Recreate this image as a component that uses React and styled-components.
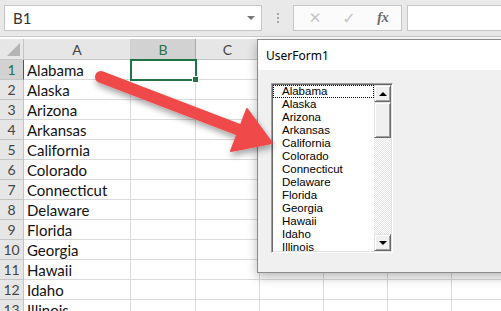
import styled, { createGlobalStyle } from 'styled-components';

const GlobalStyle = createGlobalStyle`
  html, body {
    margin: 0;
    padding: 0;
    width: 501px;
    height: 311px;
    overflow: hidden;
    background: #ffffff;
  }
`;

const states = [
  "Alabama", "Alaska", "Arizona", "Arkansas", "California", "Colorado",
  "Connecticut", "Delaware", "Florida", "Georgia", "Hawaii", "Idaho", "Illinois",
];

const columns = ["A", "B", "C", "D", "E", "F", "G"];

const Page = styled.div`
  position: relative;
  width: 501px;
  height: 311px;
  overflow: hidden;
  font-family: Lato, "Liberation Sans", sans-serif;
`;

// formula bar strip
const Toolbar = styled.div`
  display: flex;
  align-items: center;
  height: 37px;
  background: #e9e9e9;
  border-bottom: 1px solid #c9c9c9;
  margin-bottom: 2px;
  box-sizing: border-box;
  padding: 0 0 0 4px;
`;

const NameBox = styled.div`
  position: relative;
  display: flex;
  align-items: center;
  width: 258px;
  height: 26px;
  box-sizing: border-box;
  background: #fff;
  border: 1px solid #c6c6c6;
  padding-left: 8px;
  font-size: 15px;
  color: #333;
`;

const Caret = styled.span`
  position: absolute;
  right: 6px;
  top: 10px;
  width: 0;
  height: 0;
  border-left: 4px solid transparent;
  border-right: 4px solid transparent;
  border-top: 4px solid #777;
`;

const Grip = styled.div`
  width: 31px;
  display: flex;
  flex-direction: column;
  align-items: center;
  gap: 2px;
  & span {
    width: 2px;
    height: 2px;
    background: #a8a8a8;
  }
`;

const FuncBox = styled.div`
  display: flex;
  align-items: center;
  justify-content: space-between;
  width: 109px;
  height: 26px;
  box-sizing: border-box;
  background: #fbfbfb;
  border: 1px solid #c6c6c6;
  margin-right: 5px;
  padding: 0 8px 0 11px;
`;

const FuncIcon = styled.span`
  width: 20px;
  text-align: center;
  font-size: ${p => p.$size || 15}px;
  color: ${p => p.$color || "#c4c4c4"};
  font-family: ${p => p.$serif ? '"Liberation Serif", serif' : '"DejaVu Sans", sans-serif'};
  font-style: ${p => p.$serif ? "italic" : "normal"};
  font-weight: ${p => p.$serif ? "bold" : "normal"};
`;

const FormulaBox = styled.div`
  flex: 1;
  height: 26px;
  box-sizing: border-box;
  background: #fff;
  border: 1px solid #c6c6c6;
  border-right: none;
`;

const Sheet = styled.div`
  display: grid;
  grid-template-columns: 24px 107px 65px 64px 64px 64px 64px 64px;
  grid-auto-rows: 20px;
  grid-template-rows: 21px;
`;

const Corner = styled.div`
  position: relative;
  background: #e6e6e6;
  border-right: 1px solid #c4c4c4;
  border-bottom: 1px solid #c4c4c4;
  &::after {
    content: "";
    position: absolute;
    right: 3px;
    bottom: 3px;
    border-left: 13px solid transparent;
    border-bottom: 13px solid #b4b4b4;
  }
`;

const ColHead = styled.div`
  display: flex;
  align-items: center;
  justify-content: center;
  background: ${p => p.$active ? "#d2d2d2" : "#e6e6e6"};
  border-right: 1px solid ${p => p.$active ? "#a8a8a8" : "#cfcfcf"};
  border-bottom: 1px solid ${p => p.$active ? "#217346" : "#c4c4c4"};
  font-size: 14px;
  color: ${p => p.$active ? "#217346" : "#444"};
`;

const RowHead = styled.div`
  display: flex;
  align-items: center;
  justify-content: center;
  background: ${p => p.$active ? "#d2d2d2" : "#e6e6e6"};
  border-right: 1px solid ${p => p.$active ? "#217346" : "#c4c4c4"};
  border-bottom: 1px solid #c4c4c4;
  font-size: 14px;
  color: ${p => p.$active ? "#217346" : "#444"};
`;

const Cell = styled.div`
  position: relative;
  display: flex;
  align-items: center;
  padding-left: 3px;
  border-right: 1px solid #dadada;
  border-bottom: 1px solid #dadada;
  font-size: 15px;
  color: #111;
  white-space: nowrap;
  ${p => p.$selected && `
    outline: 2px solid #217346;
    outline-offset: -1px;
    z-index: 1;
    &::after {
      content: "";
      position: absolute;
      right: -4px;
      bottom: -4px;
      width: 5px;
      height: 5px;
      background: #217346;
      border: 1px solid #fff;
    }
  `}
`;

// VBA form window floating over the sheet
const FormWindow = styled.div`
  position: absolute;
  left: 257px;
  top: 39px;
  width: 300px;
  height: 232px;
  display: flex;
  flex-direction: column;
  border: 1px solid #8c8c8c;
  background: #f0f0f0;
  box-shadow: 0 4px 10px rgba(0, 0, 0, 0.28);
  z-index: 2;
`;

const TitleBar = styled.div`
  height: 30px;
  display: flex;
  align-items: center;
  padding-left: 8px;
  background: #fff;
  font-family: "Noto Sans", "Open Sans", sans-serif;
  font-size: 12px;
  color: #000;
`;

const FormBody = styled.div`
  flex: 1;
  padding: 13px 0 0 13px;
`;

const ListBox = styled.div`
  display: flex;
  width: 122px;
  height: 170px;
  box-sizing: border-box;
  border-top: 1px solid #a0a0a0;
  border-left: 1px solid #a0a0a0;
  border-right: 1px solid #fff;
  border-bottom: 1px solid #fff;
  box-shadow: inset 1px 1px 0 #696969, inset -1px -1px 0 #e3e3e3;
  background: #fff;
  padding: 1px;
`;

const Items = styled.div`
  flex: 1;
  overflow: hidden;
  font-family: "Liberation Sans", Arial, sans-serif;
  font-size: 11.5px;
  color: #000;
`;

const Item = styled.div`
  height: 13px;
  line-height: 13px;
  padding-left: 9px;
  box-sizing: border-box;
  outline: ${p => p.$focus ? "1px dotted #000" : "none"};
  outline-offset: -1px;
  white-space: nowrap;
`;

const ScrollBar = styled.div`
  width: 17px;
  display: flex;
  flex-direction: column;
  background-image: repeating-conic-gradient(#ffffff 0 25%, #e4e4e4 0 50%);
  background-size: 2px 2px;
`;

const ScrollButton = styled.div`
  height: ${p => p.$h || 17}px;
  box-sizing: border-box;
  background: #f0f0f0;
  border-top: 1px solid #e3e3e3;
  border-left: 1px solid #e3e3e3;
  border-right: 1px solid #696969;
  border-bottom: 1px solid #696969;
  box-shadow: inset 1px 1px 0 #fff, inset -1px -1px 0 #a0a0a0;
  display: flex;
  align-items: center;
  justify-content: center;
  margin-top: ${p => p.$push ? "auto" : "0"};
`;

const Tri = styled.span`
  width: 0;
  height: 0;
  border-left: 4px solid transparent;
  border-right: 4px solid transparent;
  ${p => p.$down ? "border-top: 4px solid #000;" : "border-bottom: 4px solid #000;"}
`;

const ArrowLayer = styled.svg`
  position: absolute;
  left: 0;
  top: 0;
  z-index: 3;
  pointer-events: none;
  overflow: visible;
`;

function Arrow() {
  return (
    <ArrowLayer width="501" height="311" viewBox="0 0 501 311">
      <defs>
        <filter id="shadow" x="-20%" y="-20%" width="140%" height="160%">
          <feDropShadow dx="1" dy="4" stdDeviation="3" floodColor="#000" floodOpacity="0.35" />
        </filter>
      </defs>
      <g filter="url(#shadow)">
        <line x1="101" y1="77" x2="242" y2="131" stroke="#f04848" strokeWidth="12" strokeLinecap="round" />
        <polygon points="272,143 247,109 231,151" fill="#f04848" strokeLinejoin="round" stroke="#f04848" strokeWidth="2" />
      </g>
    </ArrowLayer>
  );
}

function App() {
  return (
    <Page>
      <GlobalStyle />
      <Toolbar>
        <NameBox>B1<Caret /></NameBox>
        <Grip><span /><span /><span /></Grip>
        <FuncBox>
          <FuncIcon>✕</FuncIcon>
          <FuncIcon $size={16}>✓</FuncIcon>
          <FuncIcon $serif $color="#6a6a6a" $size={14}>fx</FuncIcon>
        </FuncBox>
        <FormulaBox />
      </Toolbar>

      <Sheet>
        <Corner />
        {columns.map(c => <ColHead key={c} $active={c === "B"}>{c}</ColHead>)}
        {states.map((s, i) => [
          <RowHead key={"h" + i} $active={i === 0}>{i + 1}</RowHead>,
          <Cell key={"a" + i}>{s}</Cell>,
          ...columns.slice(1).map(c => (
            <Cell key={c + i} $selected={i === 0 && c === "B"} />
          )),
        ])}
      </Sheet>

      <FormWindow>
        <TitleBar>UserForm1</TitleBar>
        <FormBody>
          <ListBox>
            <Items>
              {states.map((s, i) => <Item key={s} $focus={i === 0}>{s}</Item>)}
            </Items>
            <ScrollBar>
              <ScrollButton><Tri /></ScrollButton>
              <ScrollButton $h={36} />
              <ScrollButton $push><Tri $down /></ScrollButton>
            </ScrollBar>
          </ListBox>
        </FormBody>
      </FormWindow>

      <Arrow />
    </Page>
  );
}

export default App;
